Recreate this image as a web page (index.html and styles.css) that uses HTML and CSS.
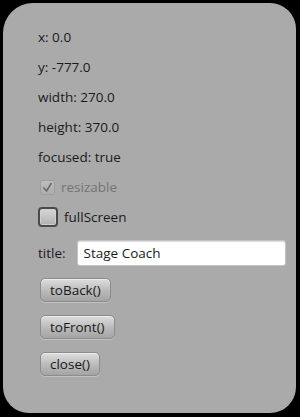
FILE: index.html
```html
<!DOCTYPE html>
<html>
    <head>
        <title>Stage Coach</title>
        <link rel="stylesheet" href="styles.css">
    </head>
    <body>
        <div class="stage">
            <p class="info">x: 0.0</p>
            <p class="info">y: -777.0</p>
            <p class="info">width: 270.0</p>
            <p class="info">height: 370.0</p>
            <p class="info">focused: true</p>

            <label class="check disabled">
                <span class="box checked">
                    <svg width="11" height="11" viewBox="0 0 11 11"><path d="M1.5 5.5 L4.5 9 L9.5 1" fill="none" stroke="#555" stroke-width="1.6"/></svg>
                </span>
                resizable
            </label>
            <label class="check">
                <span class="box big"></span>
                fullScreen
            </label>

            <div class="title-row">
                <span>title:</span>
                <input type="text" class="field" value="Stage Coach">
            </div>

            <div class="buttons">
                <button class="btn">toBack()</button>
                <button class="btn">toFront()</button>
                <button class="btn">close()</button>
            </div>
        </div>
    </body>
</html>
```

FILE: styles.css
```css
:root {
    --panel-clr: #aaaaaa;
    --font-clr: #1a1a1a;
    --muted-clr: #747474;
}

html, body {
    margin: 0;
    background-color: #000;
}

body {
    width: 300px;
    height: 417px;
    overflow: hidden;
    font-family: 'Open Sans', sans-serif;
    font-size: 13.5px;
    color: var(--font-clr);
}

.stage {
    margin: 3px 0 0 3px;
    width: 293px;
    height: 410px;
    box-sizing: border-box;
    background-color: var(--panel-clr);
    border-radius: 30px 26px 26px 26px;
    padding: 24px 0 0 35px;
    display: flex;
    flex-direction: column;
    align-items: flex-start;
    gap: 10px;
}

.info {
    margin: 0;
    height: 20px;
    line-height: 20px;
}

.check {
    display: flex;
    align-items: center;
    gap: 6px;
    height: 20px;
    line-height: 20px;
}
.check.disabled {
    color: var(--muted-clr);
    padding-left: 2px;
}

.box {
    width: 15px;
    height: 15px;
    box-sizing: border-box;
    border-radius: 3px;
    display: flex;
    align-items: center;
    justify-content: center;
}
.box.checked {
    border: 1px solid #9a9a9a;
    background: linear-gradient(#c4c4c4, #adadad);
    opacity: 0.75;
}
.box.big {
    width: 20px;
    height: 20px;
    border: 2px solid #4a4a4a;
    border-radius: 4px;
    background: linear-gradient(#d6d6d6, #b2b2b2);
    box-shadow: inset 0 0 0 1px #cfcfcf;
}

.title-row {
    display: flex;
    align-items: center;
    gap: 11px;
    height: 26px;
    margin-top: 3px;
}
.field {
    width: 209px;
    height: 26px;
    box-sizing: border-box;
    border: 1px solid #c4c4c4;
    border-radius: 3px;
    background: #fff;
    box-shadow: inset 0 1px 1px #dcdcdc;
    padding: 0 6px;
    font-family: 'Open Sans', sans-serif;
    font-size: 13.5px;
    color: var(--font-clr);
    outline: none;
}

.buttons {
    display: flex;
    flex-direction: column;
    align-items: flex-start;
    gap: 13px;
    margin-top: 2px;
    padding-left: 2px;
}
.btn {
    height: 24px;
    padding: 0 9px;
    border: 1px solid #8c8c8c;
    border-radius: 5px;
    background: linear-gradient(#dedede, #b9b9b9 55%, #a4a4a4);
    box-shadow: inset 0 1px 0 #ececec, 0 1px 0 #c2c2c2;
    font-family: 'Open Sans', sans-serif;
    font-size: 13.5px;
    color: var(--font-clr);
}
```
